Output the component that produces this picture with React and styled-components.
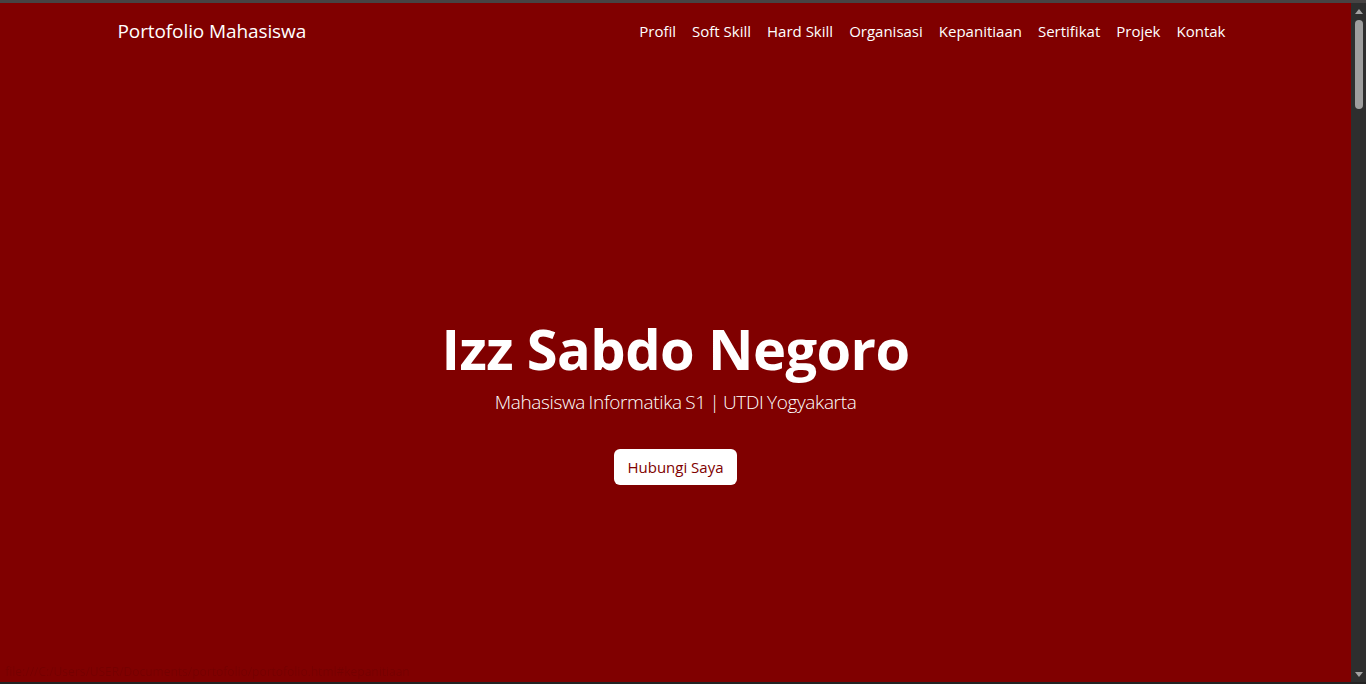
import React from 'react';
import styled, { createGlobalStyle } from 'styled-components';

const GlobalStyle = createGlobalStyle`
  html, body {
    margin: 0;
    padding: 0;
    height: 100%;
    overflow: hidden;
  }
  body {
    font-family: "Open Sans", "Noto Sans", sans-serif;
    background: #2b2b2b;
  }
  #root {
    height: 100%;
  }
`;

const Frame = styled.div`
  height: 100vh;
  display: flex;
  flex-direction: column;
  background: #2b2b2b;
`;

const TopEdge = styled.div`
  height: 3px;
  background: #474343;
  flex: none;
`;

const BottomEdge = styled.div`
  height: 2px;
  background: #232323;
  flex: none;
`;

const Viewport = styled.div`
  flex: 1;
  display: flex;
  min-height: 0;
`;

const Page = styled.main`
  flex: 1;
  position: relative;
  background: #800000;
  color: #fff;
  display: flex;
  flex-direction: column;
`;

const Navbar = styled.nav`
  height: 56px;
  flex: none;
`;

const Container = styled.div`
  max-width: 1140px;
  height: 100%;
  margin: 0 auto;
  padding: 0 12px;
  display: flex;
  align-items: center;
  justify-content: space-between;
  box-sizing: border-box;
`;

const Brand = styled.a`
  font-size: 19px;
  color: #fff;
  text-decoration: none;
  letter-spacing: -0.1px;
`;

const NavList = styled.ul`
  display: flex;
  list-style: none;
  margin: 0;
  padding: 0;
`;

const NavLink = styled.a`
  display: block;
  padding: 8px 8px;
  font-size: 15px;
  color: #fff;
  text-decoration: none;
`;

const Hero = styled.section`
  flex: 1;
  display: flex;
  flex-direction: column;
  align-items: center;
  padding-top: 256px;
  text-align: center;
`;

const Title = styled.h1`
  margin: 0 0 5px;
  font-size: 56px;
  line-height: 67px;
  font-weight: 700;
  letter-spacing: -0.6px;
`;

const Lead = styled.p`
  margin: 0 0 32px;
  font-size: 19px;
  line-height: 30px;
  font-weight: 300;
  letter-spacing: -0.35px;
  word-spacing: -1px;
`;

const Button = styled.a`
  display: inline-flex;
  align-items: center;
  justify-content: center;
  height: 36px;
  padding: 0 13px;
  background: #fff;
  color: #800000;
  border-radius: 6px;
  font-size: 15px;
  text-decoration: none;
`;

const StatusText = styled.div`
  position: absolute;
  left: 5px;
  bottom: 2px;
  font-size: 12px;
  color: rgba(40, 0, 0, 0.12);
`;

const Scrollbar = styled.div`
  width: 15px;
  flex: none;
  background: #2e2e2e;
  display: flex;
  flex-direction: column;
  align-items: center;
`;

const Arrow = styled.div`
  width: 0;
  height: 0;
  border-left: 4px solid transparent;
  border-right: 4px solid transparent;
  ${p => p.down
    ? 'border-top: 5px solid #a3a3a3; margin-top: auto; margin-bottom: 5px;'
    : 'border-bottom: 5px solid #a3a3a3; margin-top: 6px;'}
`;

const Thumb = styled.div`
  width: 8px;
  height: 89px;
  margin-top: 6px;
  border-radius: 4px;
  background: #9e9e9e;
`;

const links = ['Profil', 'Soft Skill', 'Hard Skill', 'Organisasi', 'Kepanitiaan', 'Sertifikat', 'Projek', 'Kontak'];

export default function App() {
  return (
    <Frame>
      <GlobalStyle />
      <TopEdge />
      <Viewport>
        <Page>
          <Navbar>
            <Container>
              <Brand href="#">Portofolio Mahasiswa</Brand>
              <NavList>
                {links.map(l => (
                  <li key={l}><NavLink href={'#' + l.toLowerCase()}>{l}</NavLink></li>
                ))}
              </NavList>
            </Container>
          </Navbar>
          <Hero>
            <Title>Izz Sabdo Negoro</Title>
            <Lead>Mahasiswa Informatika S1 | UTDI Yogyakarta</Lead>
            <Button href="#kontak">Hubungi Saya</Button>
          </Hero>
          <StatusText>file:///C:/Users/USER/Documents/portofolio/portofolio.html#kepanitiaan</StatusText>
        </Page>
        <Scrollbar>
          <Arrow />
          <Thumb />
          <Arrow down />
        </Scrollbar>
      </Viewport>
      <BottomEdge />
    </Frame>
  );
}
